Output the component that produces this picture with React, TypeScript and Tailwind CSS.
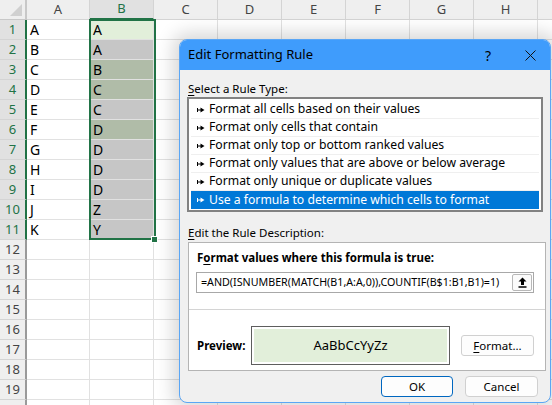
import React from "react";

const COLS = ["A", "B", "C", "D", "E", "F", "G", "H"];
const colA = ["A", "B", "C", "D", "E", "F", "G", "H", "I", "J", "K"];
const colB = ["A", "A", "B", "C", "C", "D", "D", "D", "D", "Z", "Y"];
const fillB = [
  "bg-[#e2efda]",
  "bg-[#c6c6c6]",
  "bg-[#b0bca8]",
  "bg-[#b0bca8]",
  "bg-[#c6c6c6]",
  "bg-[#b0bca8]",
  "bg-[#c6c6c6]",
  "bg-[#c6c6c6]",
  "bg-[#c6c6c6]",
  "bg-[#c6c6c6]",
  "bg-[#c6c6c6]",
];

const ruleTypes = [
  "Format all cells based on their values",
  "Format only cells that contain",
  "Format only top or bottom ranked values",
  "Format only values that are above or below average",
  "Format only unique or duplicate values",
  "Use a formula to determine which cells to format",
];

function Marker({ color }: { color: string }) {
  return (
    <svg width="8" height="6" viewBox="0 0 8 6" className="shrink-0">
      <path d="M0.5 1v4" stroke={color} strokeWidth="1" />
      <path d="M1 3h3" stroke={color} strokeWidth="1.2" />
      <path d="M3.5 0.5L7.5 3L3.5 5.5z" fill={color} />
    </svg>
  );
}

function Sheet() {
  const rows = Array.from({ length: 21 }, (_, i) => i);
  return (
    <div className="flex flex-col font-['Noto_Sans',sans-serif]">
      {/* header */}
      <div className="flex h-[20px]">
        <div className="w-[27px] shrink-0 bg-[#efefef] border-r-2 border-b border-[#c8c8c8] relative">
          <svg width="12" height="12" viewBox="0 0 12 12" className="absolute right-[3px] bottom-[3px]">
            <path d="M12 0L12 12L0 12z" fill="#d0d0d0" />
          </svg>
        </div>
        {COLS.map((c, i) => (
          <div
            key={c}
            className={`${i === 0 ? "w-[63px]" : "w-[64px]"} shrink-0 flex items-center justify-center text-[13px] border-r ${
              c === "B"
                ? "bg-[#e1e1e1] text-[#217346] border-b-2 border-b-[#217346] border-r-[#d4d4d4]"
                : "bg-[#efefef] text-[#444] border-b border-[#d4d4d4]"
            }`}
          >
            {c}
          </div>
        ))}
        <div className="flex-1 bg-[#efefef] border-b border-[#d4d4d4]" />
      </div>
      {rows.slice(1).map((r) => {
        const sel = r <= 11;
        return (
          <div key={r} className="flex h-[20px]">
            <div
              className={`w-[27px] shrink-0 flex items-center justify-center text-[13px] border-r-2 border-b ${
                sel
                  ? "bg-[#e1e1e1] text-[#217346] border-r-[#217346] border-b-[#d4d4d4]"
                  : "bg-[#efefef] text-[#444] border-r-[#9a9a9a] border-b-[#d4d4d4]"
              }`}
            >
              {r < 20 ? r : ""}
            </div>
            {COLS.map((c, i) => (
              <div
                key={c}
                className={`${i === 0 ? "w-[63px]" : "w-[64px]"} shrink-0 flex items-center pl-[3px] text-[14px] text-black border-r border-b border-[#e1e1e1] ${
                  c === "B" && sel ? fillB[r - 1] : "bg-white"
                }`}
              >
                {c === "A" && sel ? colA[r - 1] : c === "B" && sel ? colB[r - 1] : ""}
              </div>
            ))}
            <div className="flex-1 border-b border-[#e1e1e1]" />
          </div>
        );
      })}
    </div>
  );
}

function Dialog() {
  return (
    <div className="absolute left-[179px] top-[39px] w-[372px] h-[364px] rounded-[8px] border border-[#5aa6f5] overflow-hidden flex flex-col bg-[#f0f0f0] shadow-[0_0_18px_6px_rgba(0,0,0,0.16)] font-['Noto_Sans',sans-serif] text-[11.5px] text-black">
      <div className="h-[30px] shrink-0 bg-[#3f9cfc] flex items-center pl-[8px] pr-[14px]">
        <span className="text-[13px] flex-1">Edit Formatting Rule</span>
        <span className="text-[14px] mr-[34px]">?</span>
        <svg width="11" height="11" viewBox="0 0 11 11">
          <path d="M0.5 0.5L10.5 10.5M10.5 0.5L0.5 10.5" stroke="#111" strokeWidth="1" />
        </svg>
      </div>
      <div className="flex-1 flex flex-col px-[7px]">
        <div className="mt-[11px] h-[16px] leading-[16px] pl-[1px]">
          <span className="underline underline-offset-2">S</span>elect a Rule Type:
        </div>
        <div className="h-[115px] bg-white border-2 border-[#828282] pt-[2px] px-[2px] flex flex-col">
          {ruleTypes.map((t, i) => {
            const active = i === ruleTypes.length - 1;
            return (
              <div
                key={t}
                className={`h-[18px] shrink-0 flex items-center gap-[4px] pl-[6px] text-[12.2px] ${
                  active ? "bg-[#0078d7] text-white" : "border-b border-[#efefef]"
                }`}
              >
                <Marker color={active ? "#ffffff" : "#000000"} />
                <span className="whitespace-nowrap">{t}</span>
              </div>
            );
          })}
        </div>
        <div className="mt-[13px] h-[16px] leading-[16px] pl-[1px]">
          <span className="underline underline-offset-2">E</span>dit the Rule Description:
        </div>
        <div className="mt-[1px] ml-[1px] w-[358px] h-[129px] bg-white border border-[#b4b4b4] pl-[7px] pt-[7px] flex flex-col">
          <div className="h-[16px] leading-[16px] font-bold pl-[1px]">
            F<span className="underline underline-offset-2">o</span>rmat values where this formula is true:
          </div>
          <div className="mt-[6px] w-[338px] h-[21px] border border-[#a8a8a8] flex items-center pl-[4px] pr-[1px]">
            <span className="flex-1 whitespace-nowrap text-[10.7px]">=AND(ISNUMBER(MATCH(B1,A:A,0)),COUNTIF(B$1:B1,B1)=1)</span>
            <div className="w-[20px] h-[17px] border border-[#b8b8b8] rounded-[2px] bg-[#fbfbfb] flex items-center justify-center">
              <svg width="9" height="11" viewBox="0 0 9 11">
                <path d="M4.5 0.5L8.5 4.5H6V8H3V4.5H0.5z" fill="#000" />
                <path d="M0.5 10h8" stroke="#000" strokeWidth="1.4" />
              </svg>
            </div>
          </div>
          <div className="mt-[16px] -ml-[7px] w-[356px] h-px bg-[#d4d4d4]" />
          <div className="mt-[16px] flex items-center h-[39px]">
            <div className="w-[55px] font-bold pl-[1px]">Preview:</div>
            <div className="w-[199px] h-[39px] border border-[#5e5e5e] p-[2px] bg-white">
              <div className="w-full h-full bg-[#e2efda] flex items-center justify-center text-[13px]">AaBbCcYyZz</div>
            </div>
            <div className="ml-[11px] w-[73px] h-[21px] rounded-[3px] border border-[#d0d0d0] bg-[#fdfdfd] flex items-center justify-center">
              <span>
                <span className="underline underline-offset-2">F</span>ormat...
              </span>
            </div>
          </div>
        </div>
        <div className="mt-[5px] flex justify-end gap-[12px] pr-[5px]">
          <div className="w-[72px] h-[21px] rounded-[4px] border border-[#0067c0] bg-[#fdfdfd] flex items-center justify-center">
            OK
          </div>
          <div className="w-[73px] h-[21px] rounded-[4px] border border-[#d0d0d0] bg-[#fdfdfd] flex items-center justify-center">
            Cancel
          </div>
        </div>
      </div>
    </div>
  );
}

export default function App() {
  return (
    <div className="relative w-[552px] h-[405px] overflow-hidden bg-white">
      <Sheet />
      {/* selection outline B1:B11 */}
      <div className="absolute left-[89px] top-[19px] w-[67px] h-[221px] border-2 border-[#217346]" />
      <div className="absolute left-[152px] top-[237px] w-[5px] h-[5px] bg-[#217346] outline outline-1 outline-white" />
      <Dialog />
    </div>
  );
}
